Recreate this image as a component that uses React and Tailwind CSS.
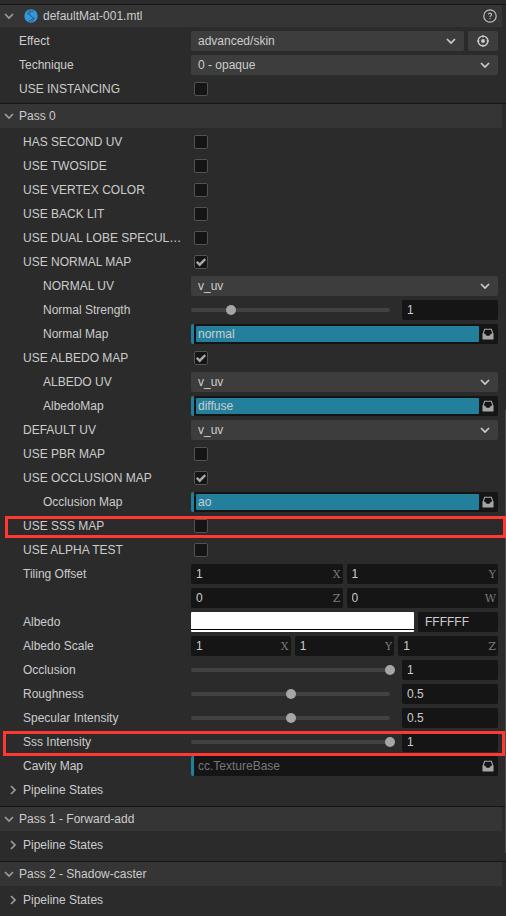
import React, { useId } from 'react';

function Chevron({ open = true, className = '' }) {
  return (
    <svg viewBox="0 0 10 10" className={`size-[10px] shrink-0 ${className}`} fill="none" stroke="currentColor" strokeWidth="1.7" aria-hidden="true">
      {open ? <path d="M1 3l4 4 4-4" /> : <path d="M3 1l4 4-4 4" />}
    </svg>
  );
}

function Header({ title, logo }) {
  return (
    <header className="border-t border-[#151515]">
      <div className={`mr-1 flex items-center bg-[#353535] pl-1 ${logo ? 'h-[22px]' : 'h-6'}`}>
        <button aria-label={`Collapse ${title}`} className="flex items-center text-[#9c9c9c]">
          <Chevron />
        </button>
        {logo && (
          <svg viewBox="0 0 14 14" className="ml-[10px] size-[14px]" aria-hidden="true">
            <circle cx="7" cy="7" r="6.7" fill="#3498db" />
            <path d="M9.500 2C6 3 4.800 4.300 5.600 6M8.400 8C9.200 9.700 8 11 4.500 12M6.800 1.500C4.500 2.500 3.600 4 4 5.800M10 8.200C10.400 10 9.500 11.500 7.200 12.500M5.600 6L8.400 8" fill="none" stroke="#244f70" strokeWidth="1" />
          </svg>
        )}
        <h2 className="ml-[5px] flex-1">{title}</h2>
        {logo && (
          <button aria-label="Help" className="mr-[5px] text-[#bdbdbd]">
            <svg viewBox="0 0 14 14" className="size-[14px]" fill="none" stroke="currentColor" aria-hidden="true">
              <circle cx="7" cy="7" r="6.200" strokeWidth="1.200" />
              <path d="M5.400 5.600c0-2 3.200-2 3.200 0 0 1.100-1.600 1.100-1.600 2.400M7 9v1.200" strokeWidth="1.100" />
            </svg>
          </button>
        )}
      </div>
    </header>
  );
}

const indents = { 0: 'pl-[19px]', 1: 'pl-[23px]', 2: 'pl-[43px]' };

function Row({ label, htmlFor, level = 1, mark, children }) {
  return (
    <div className="relative flex min-h-5 items-start pr-2">
      <label htmlFor={htmlFor} className={`mr-[7px] w-[184px] shrink-0 truncate leading-5 ${indents[level]}`}>
        {label}
      </label>
      <div className="min-w-0 flex-1">{children}</div>
      {mark === 'map' && <div className="pointer-events-none absolute left-[5px] right-0 top-0 z-10 h-[22px] border-3 border-[#ff3832]" />}
      {mark === 'intensity' && <div className="pointer-events-none absolute -top-px left-[3px] right-px z-10 h-[25px] border-3 border-[#ff3832]" />}
    </div>
  );
}

function CheckRow({ label, checked = false, level, mark }) {
  const id = useId();
  return (
    <Row label={label} htmlFor={id} level={level} mark={mark}>
      <div className="grid h-5 w-5 place-items-center">
        <input
          id={id}
          type="checkbox"
          defaultChecked={checked}
          className="peer col-start-1 row-start-1 size-[14px] appearance-none rounded-xs border border-[#525252] bg-[#151515]"
        />
        <svg viewBox="0 0 10 10" className="pointer-events-none col-start-1 row-start-1 hidden size-[10px] peer-checked:block" fill="none" stroke="#a8a8a8" strokeWidth="2.400" aria-hidden="true">
          <path d="M0.700 4.800l3 2.900L9.300 2" />
        </svg>
      </div>
    </Row>
  );
}

function Select({ id, value }) {
  return (
    <div className="grid min-w-0 flex-1 items-center">
      <select id={id} defaultValue={value} className="col-start-1 row-start-1 h-5 w-full appearance-none rounded-xs bg-[#3d3d3d] pl-[7px] pr-6">
        <option>{value}</option>
      </select>
      <Chevron className="pointer-events-none col-start-1 row-start-1 mr-2 justify-self-end text-[#cccccc]" />
    </div>
  );
}

function SelectRow({ label, value, level, picker }) {
  const id = useId();
  return (
    <Row label={label} htmlFor={id} level={level}>
      <div className="flex gap-1">
        <Select id={id} value={value} />
        {picker && (
          <button aria-label="Locate effect" className="flex h-5 w-[30px] items-center justify-center rounded-xs bg-[#3d3d3d] text-[#cccccc]">
            <svg viewBox="0 0 12 12" className="size-3" fill="none" stroke="currentColor" aria-hidden="true">
              <circle cx="6" cy="6" r="4.900" strokeWidth="1.400" />
              <circle cx="6" cy="6" r="1.900" fill="currentColor" stroke="none" />
              <path d="M6 0v2.500M6 9.500V12M0 6h2.500M9.500 6H12" strokeWidth="1.200" />
            </svg>
          </button>
        )}
      </div>
    </Row>
  );
}

function SliderRow({ label, value, position, level, mark }) {
  const id = useId();
  return (
    <Row label={label} htmlFor={id} level={level} mark={mark}>
      <div className="flex gap-3">
        <div className="grid flex-1 items-center">
          <div className="col-start-1 row-start-1 h-1 rounded-full bg-[#424242]" />
          <input
            id={id}
            type="range"
            min="0"
            max="100"
            defaultValue={position}
            className="col-start-1 row-start-1 -mx-[5px] h-[10px] appearance-none bg-transparent [&::-webkit-slider-thumb]:size-[10px] [&::-webkit-slider-thumb]:appearance-none [&::-webkit-slider-thumb]:rounded-full [&::-webkit-slider-thumb]:bg-[#a6a6a6]"
          />
        </div>
        <input aria-label={`${label} value`} defaultValue={value} className="h-5 w-24 rounded-xs bg-[#151515] px-[5px]" />
      </div>
    </Row>
  );
}

function AssetRow({ label, value, level }) {
  const id = useId();
  return (
    <Row label={label} htmlFor={id} level={level}>
      <div className="flex h-5 items-center rounded-xs border-l-3 border-[#23809c] bg-[#151515] pl-[2px] pr-1">
        <input
          id={id}
          readOnly
          defaultValue={value}
          placeholder="cc.TextureBase"
          className={`h-4 min-w-0 flex-1 rounded-[1px] px-[2px] placeholder:text-[#777777] ${value ? 'bg-[#23809c]' : 'bg-transparent'}`}
        />
        <button aria-label={`Browse ${label}`} className="ml-[3px] text-[#a6a6a6]">
          <svg viewBox="0 0 12 12" className="size-3" aria-hidden="true">
            <path d="M1 6.500L2.600 1.200h6.800L11 6.500" fill="none" stroke="currentColor" strokeWidth="1.100" />
            <path d="M0.500 5.800h2.600l1.400 1.900h3l1.400-1.900h2.600V11.500h-11z" fill="currentColor" />
          </svg>
        </button>
      </div>
    </Row>
  );
}

function VectorFields({ label, fields }) {
  return (
    <div className="flex gap-1">
      {fields.map(([axis, value]) => (
        <label key={axis} className="flex h-5 min-w-0 flex-1 items-center rounded-xs bg-[#151515] pl-[5px] pr-[2px]">
          <input aria-label={`${label} ${axis}`} defaultValue={value} className="min-w-0 flex-1 bg-transparent" />
          <span className="pt-px font-['DejaVu_Serif',serif] text-[11px] text-[#7a7a7a]">{axis}</span>
        </label>
      ))}
    </div>
  );
}

function PipelineStates() {
  return (
    <button className="flex h-5 items-center pl-2">
      <Chevron open={false} className="text-[#9c9c9c]" />
      <span className="ml-[5px]">Pipeline States</span>
    </button>
  );
}

export default function App() {
  return (
    <main className="relative min-h-screen bg-[#2b2b2b] pt-1 font-['Liberation_Sans',Arial,sans-serif] text-[12px] leading-5 text-[#cccccc]">
      <Header title="defaultMat-001.mtl" logo />
      <section className="flex flex-col gap-1 py-1">
        <SelectRow label="Effect" value="advanced/skin" level={0} picker />
        <SelectRow label="Technique" value="0 - opaque" level={0} />
        <CheckRow label="USE INSTANCING" level={0} />
      </section>

      <Header title="Pass 0" />
      <section className="flex flex-col gap-1 pb-[6px] pt-1">
        <CheckRow label="HAS SECOND UV" />
        <CheckRow label="USE TWOSIDE" />
        <CheckRow label="USE VERTEX COLOR" />
        <CheckRow label="USE BACK LIT" />
        <CheckRow label="USE DUAL LOBE SPECULAR" />
        <CheckRow label="USE NORMAL MAP" checked />
        <SelectRow label="NORMAL UV" value="v_uv" level={2} />
        <SliderRow label="Normal Strength" value="1" position={20} level={2} />
        <AssetRow label="Normal Map" value="normal" level={2} />
        <CheckRow label="USE ALBEDO MAP" checked />
        <SelectRow label="ALBEDO UV" value="v_uv" level={2} />
        <AssetRow label="AlbedoMap" value="diffuse" level={2} />
        <SelectRow label="DEFAULT UV" value="v_uv" />
        <CheckRow label="USE PBR MAP" />
        <CheckRow label="USE OCCLUSION MAP" checked />
        <AssetRow label="Occlusion Map" value="ao" level={2} />
        <CheckRow label="USE SSS MAP" mark="map" />
        <CheckRow label="USE ALPHA TEST" />
        <Row label="Tiling Offset">
          <div className="flex flex-col gap-1">
            <VectorFields label="Tiling Offset" fields={[['X', '1'], ['Y', '1']]} />
            <VectorFields label="Tiling Offset" fields={[['Z', '0'], ['W', '0']]} />
          </div>
        </Row>
        <Row label="Albedo" htmlFor="albedo-hex">
          <div className="flex gap-1">
            <button aria-label="Pick albedo color" className="flex h-5 flex-1 flex-col justify-end rounded-[1px] bg-white pb-[2px]">
              <span className="h-px w-full bg-black" />
            </button>
            <input id="albedo-hex" defaultValue="FFFFFF" className="h-5 w-20 rounded-xs bg-[#151515] px-[7px]" />
          </div>
        </Row>
        <Row label="Albedo Scale">
          <VectorFields label="Albedo Scale" fields={[['X', '1'], ['Y', '1'], ['Z', '1']]} />
        </Row>
        <SliderRow label="Occlusion" value="1" position={100} />
        <SliderRow label="Roughness" value="0.5" position={50} />
        <SliderRow label="Specular Intensity" value="0.5" position={50} />
        <SliderRow label="Sss Intensity" value="1" position={100} mark="intensity" />
        <AssetRow label="Cavity Map" />
        <PipelineStates />
      </section>

      <Header title="Pass 1 - Forward-add" />
      <section className="pb-[6px] pt-1">
        <PipelineStates />
      </section>

      <Header title="Pass 2 - Shadow-caster" />
      <section className="pb-[6px] pt-1">
        <PipelineStates />
      </section>
      <div className="absolute right-0 top-[410px] h-[443px] w-px bg-[#4d4d4d]" />
    </main>
  );
}
